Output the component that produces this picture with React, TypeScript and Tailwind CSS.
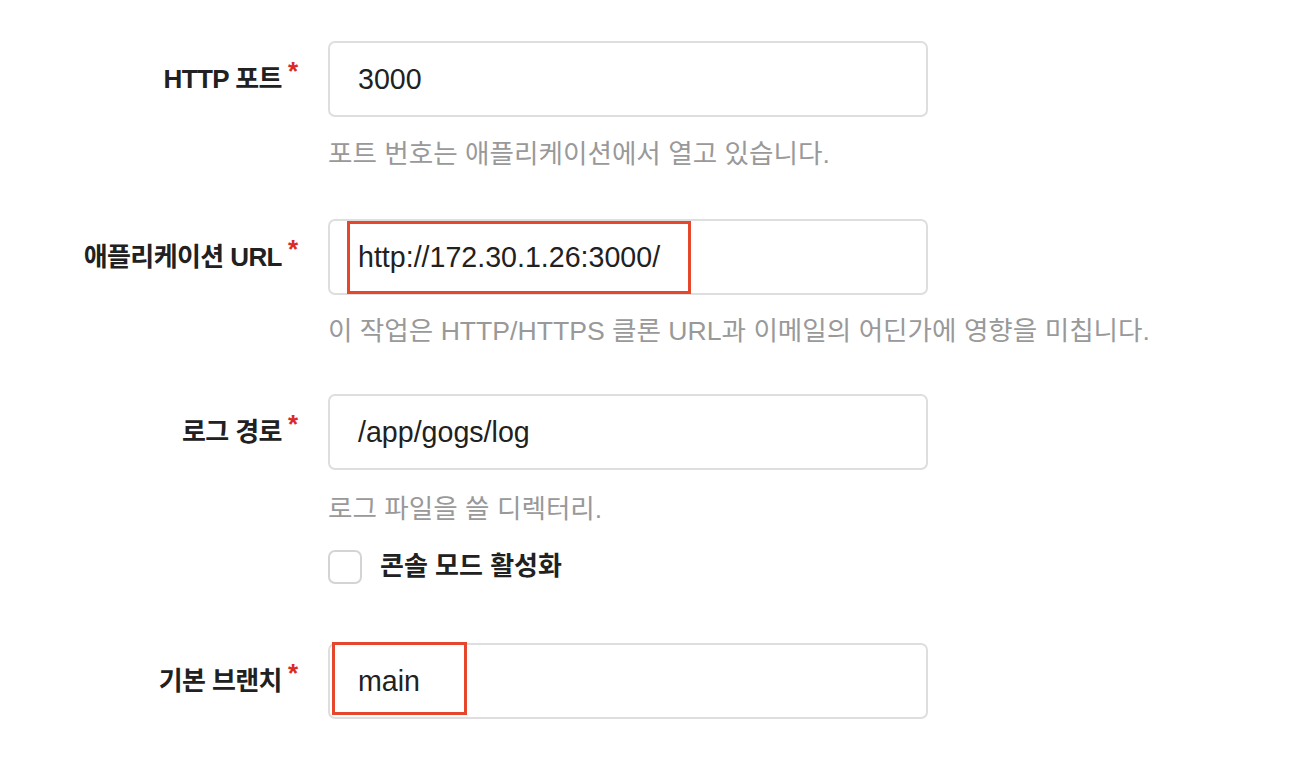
import React from "react";

function Label({ text }: { text: string }) {
  return (
    <div className="w-[328px] shrink-0 flex justify-end pr-[30px]">
      <span className="text-[26px] font-bold text-[#212121] leading-[36px] tracking-[-0.6px]">{text}</span>
      <span className="ml-[6px] -mt-[8px] text-[26px] font-bold text-[#db2828] leading-[36px]">*</span>
    </div>
  );
}

function Input({ value, children }: { value: string; children?: React.ReactNode }) {
  return (
    <div className="relative w-[600px] h-[76px] border-2 border-[#dedede] rounded-[7px] bg-white flex items-center pl-[28px]">
      <span className="text-[28.6px] text-[#212121]">{value}</span>
      {children}
    </div>
  );
}

function Help({ text, className }: { text: string; className: string }) {
  return (
    <div className={"pl-[328px] text-[26.6px] leading-[36px] text-[#999999] " + className}>{text}</div>
  );
}

export default function App() {
  return (
    <div className="w-[1310px] h-[774px] bg-white pt-[41px] font-[Liberation_Sans,Noto_Sans_CJK_KR,sans-serif]">
      <div className="flex items-center">
        <Label text="HTTP 포트" />
        <Input value="3000" />
      </div>
      <Help text="포트 번호는 애플리케이션에서 열고 있습니다." className="mt-[19px]" />

      <div className="flex items-center mt-[47px]">
        <Label text="애플리케이션 URL" />
        <Input value="http://172.30.1.26:3000/">
          <div className="absolute left-[17px] top-[0px] w-[344px] h-[73px] border-[3px] border-[#e5472d]" />
        </Input>
      </div>
      <Help text="이 작업은 HTTP/HTTPS 클론 URL과 이메일의 어딘가에 영향을 미칩니다." className="mt-[18px]" />

      <div className="flex items-center mt-[45px]">
        <Label text="로그 경로" />
        <Input value="/app/gogs/log" />
      </div>
      <Help text="로그 파일을 쓸 디렉터리." className="mt-[21px]" />

      <div className="flex items-center pl-[328px] mt-[20px]">
        <div className="w-[34px] h-[34px] border-2 border-[#d4d4d4] rounded-[7px] bg-white" />
        <span className="ml-[18px] text-[26px] font-bold text-[#212121]">콘솔 모드 활성화</span>
      </div>

      <div className="flex items-center mt-[57px]">
        <Label text="기본 브랜치" />
        <Input value="main">
          <div className="absolute left-[2px] -top-[3px] w-[135px] h-[73px] border-[3px] border-[#e5472d]" />
        </Input>
      </div>
    </div>
  );
}
